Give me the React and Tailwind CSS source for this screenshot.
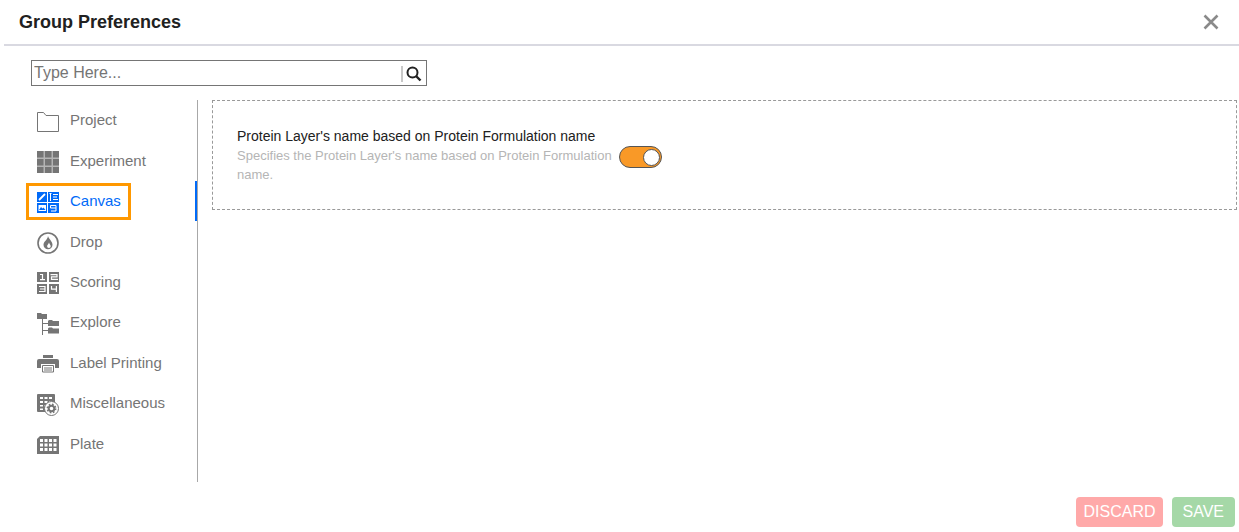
import { useState } from 'react';

const NumberTiles = () => (
  <>
    <path fill="currentColor" d="M0 0h10v10H0zM12 0h10v10H12zM0 12h10v10H0zM12 12h10v10H12z" />
    <path
      fill="none"
      stroke="#fff"
      strokeWidth="1.2"
      d="M3 2.5h2.5v5M3 7.6h5M13.5 2.6H20v2.2h-5.5v2.6H21M2 14.5h6v5H2M3 17h5M14.5 14v3.2H20M19.4 14v6"
    />
  </>
);

const items = [
  {
    name: 'Project',
    icon: <path fill="none" stroke="currentColor" d="M.5 1.5h6l2.5 3h12.5v16H.5z" />,
  },
  {
    name: 'Experiment',
    icon: (
      <>
        <path fill="#b5b5b5" d="M0 0h22v22H0z" />
        <path
          fill="currentColor"
          d="M0 0h6.500v6.500H0zM8 0h6.500v6.500H8zM16 0h6v6.500h-6zM0 8h6.500v6.500H0zM8 8h6.500v6.500H8zM16 8h6v6.500h-6zM0 16h6.500v6H0zM8 16h6.500v6H8zM16 16h6v6h-6z"
        />
      </>
    ),
  },
  {
    name: 'Canvas',
    icon: (
      <>
        <path fill="currentColor" d="M0 0h10v10H0zM11 0h11v10H11zM0 11h10v10H0zM11 11h11v10H11z" />
        <path fill="none" stroke="#fff" strokeWidth="1.8" d="M2 8l6-6" />
        <path fill="none" stroke="#fff" d="M13.5 1v8M12.5 1.5h2M16 2.5h5M16 5h4M16 7.5h5" />
        <path fill="#fff" d="M1.500 13h7.500v6H1.500z" />
        <path fill="currentColor" d="M2 18l2-3 1.500 1.500 1-1 2 2.500z" />
        <path fill="none" stroke="#fff" d="M13.500 13.500h5.500v5.500H14M13.500 13.500v2.500h5.500" />
      </>
    ),
  },
  {
    name: 'Drop',
    icon: (
      <>
        <circle cx="11" cy="11" r="10" fill="none" stroke="currentColor" strokeWidth="1.6" />
        <path fill="currentColor" d="M11 4c.5 3 4.500 5 4.500 8.800a4.500 4.500 0 0 1-9 0C6.500 9.500 10.500 8 11 4z" />
        <path fill="#fff" d="M12 10.500c.3 1.500 1.700 2.300 1.700 3.800a1.800 1.800 0 0 1-3.600 0c0-1.500 1.600-2.300 1.900-3.800z" />
      </>
    ),
  },
  { name: 'Scoring', icon: <NumberTiles /> },
  {
    name: 'Explore',
    icon: (
      <>
        <path fill="none" stroke="currentColor" d="M5.500 6v16M5.500 10.500H12M5.500 17.500H12" />
        <path
          fill="currentColor"
          d="M0 0h4l1 1h5v5H0zM11 8l1-1h3l1 1h6v5H11zM11 15.500l1-1h3l1 1h6v5H11z"
        />
      </>
    ),
  },
  {
    name: 'Label Printing',
    icon: (
      <>
        <path fill="currentColor" d="M6 2h10v3H6zM2 6h18a2 2 0 0 1 2 2v7h-4v-4H4v4H0V8a2 2 0 0 1 2-2z" />
        <path fill="none" stroke="currentColor" d="M5.500 12.500h11v6.500h-11zM7 15h8M7 17h8" />
      </>
    ),
  },
  {
    name: 'Miscellaneous',
    icon: (
      <>
        <rect width="18" height="18" rx="1" fill="currentColor" />
        <path
          fill="#fff"
          d="M3 3h3v2H3zM7.500 3h3v2h-3zM12 3h3v2h-3zM3 7h3v2H3zM7.500 7h3v2h-3zM12 7h3v2h-3zM3 11h3v1.500H3zM7.500 11h3v1.500h-3zM3 14.500h3V16H3z"
        />
        <circle cx="14.5" cy="14.500" r="7" fill="#fff" stroke="currentColor" strokeWidth="1" />
        <circle cx="14.5" cy="14.500" r="2.800" fill="none" stroke="currentColor" strokeWidth="2" />
        <circle
          cx="14.5"
          cy="14.500"
          r="4.200"
          fill="none"
          stroke="currentColor"
          strokeWidth="1.500"
          strokeDasharray="1.650 1.650"
        />
      </>
    ),
  },
  {
    name: 'Plate',
    icon: (
      <>
        <path fill="currentColor" d="M3 2h19v18H0V5z" />
        <path
          fill="#fff"
          d="M3 5h3v3H3zM7.500 5h3v3h-3zM12 5h3v3h-3zM16.500 5h3v3h-3zM3 9.500h3v3H3zM7.500 9.500h3v3h-3zM12 9.500h3v3h-3zM16.500 9.500h3v3h-3zM3 14h3v3H3zM7.500 14h3v3h-3zM12 14h3v3h-3zM16.500 14h3v3h-3z"
        />
      </>
    ),
  },
];

export default function App() {
  const [active, setActive] = useState('Canvas');
  const [search, setSearch] = useState('');
  const [enabled, setEnabled] = useState(true);

  return (
    <main className="flex min-h-screen flex-col bg-white font-['Liberation_Sans',Arial,sans-serif]">
      <header className="ml-1 flex h-[46px] items-center justify-between border-b-2 border-[#d9d9e1] pr-5 pl-[15px]">
        <h1 className="text-lg font-bold text-[#212121]">Group Preferences</h1>
        <button aria-label="Close" className="text-[#8a8a8a]">
          <svg viewBox="0 0 16 16" className="size-4" fill="none" stroke="currentColor" strokeWidth="2.6">
            <path d="M1.500 1.500l13 13M14.500 1.500l-13 13" />
          </svg>
        </button>
      </header>

      <div className="mt-[14px] ml-[31px] flex h-[26px] w-[396px] items-center border border-[#757575] pr-1">
        <input
          type="text"
          aria-label="Search preferences"
          value={search}
          onChange={(e) => setSearch(e.target.value)}
          placeholder="Type Here..."
          className="min-w-0 flex-1 px-0.5 text-base leading-6 placeholder-[#757575] outline-none"
        />
        <button aria-label="Search" className="mt-0.5 flex h-4 items-center border-l-2 border-[#c8c8c8] pl-[3px] text-[#222]">
          <svg viewBox="0 0 16 16" className="size-4" fill="none" stroke="currentColor" strokeWidth="2">
            <circle cx="6.5" cy="6.500" r="5" />
            <path d="M10 10l4.500 4.500" strokeWidth="2.400" />
          </svg>
        </button>
      </div>

      <div className="mt-[14px] flex items-start">
        <nav className="w-[198px] shrink-0 border-r border-[#a8a8a8] pb-[18px] pl-[26px]">
          <ul className="grid h-[364px] auto-rows-fr">
            {items.map(({ name, icon }) => (
              <li
                key={name}
                className={`flex items-center border-r-2 ${active === name ? 'border-[#006af8]' : 'border-transparent'}`}
              >
                <button
                  onClick={() => setActive(name)}
                  className={`flex h-[37px] items-center gap-[11px] border-[3px] pr-[7px] pl-2 text-[15px] leading-5 ${
                    active === name ? 'border-[#ff9800] text-[#006af8]' : 'border-transparent text-[#757575]'
                  }`}
                >
                  <svg viewBox="0 0 22 22" className="mt-[3px] size-[22px] shrink-0">
                    {icon}
                  </svg>
                  <span className="whitespace-nowrap">{name}</span>
                </button>
              </li>
            ))}
          </ul>
        </nav>

        <section className="mr-0.5 ml-[14px] flex flex-1 items-start border border-dashed border-[#999] px-6 pt-[25px] pb-[25px]">
          <div className="w-[382px]">
            <label htmlFor="protein-name" className="block text-sm leading-5 whitespace-nowrap text-[#212121]">
              Protein Layer's name based on Protein Formulation name
            </label>
            <p className="text-[13px] leading-[19px] text-[#b5b5b5]">
              Specifies the Protein Layer's name based on Protein Formulation name.
            </p>
          </div>
          <input
            id="protein-name"
            type="checkbox"
            role="switch"
            checked={enabled}
            onChange={(e) => setEnabled(e.target.checked)}
            className="mt-5 flex h-[22px] w-[43px] shrink-0 appearance-none items-center rounded-full border border-[#555] bg-gray-300 px-px before:size-[17px] before:rounded-full before:border before:border-[#555] before:bg-white checked:justify-end checked:bg-[#f99927]"
          />
        </section>
      </div>

      <footer className="mt-[15px] flex justify-end gap-[9px] pr-1 text-base text-white">
        <button className="h-[30px] rounded bg-[#ffa9a9] px-[7px]">DISCARD</button>
        <button className="h-[30px] rounded bg-[#a5d8a7] px-[11px]">SAVE</button>
      </footer>
    </main>
  );
}
